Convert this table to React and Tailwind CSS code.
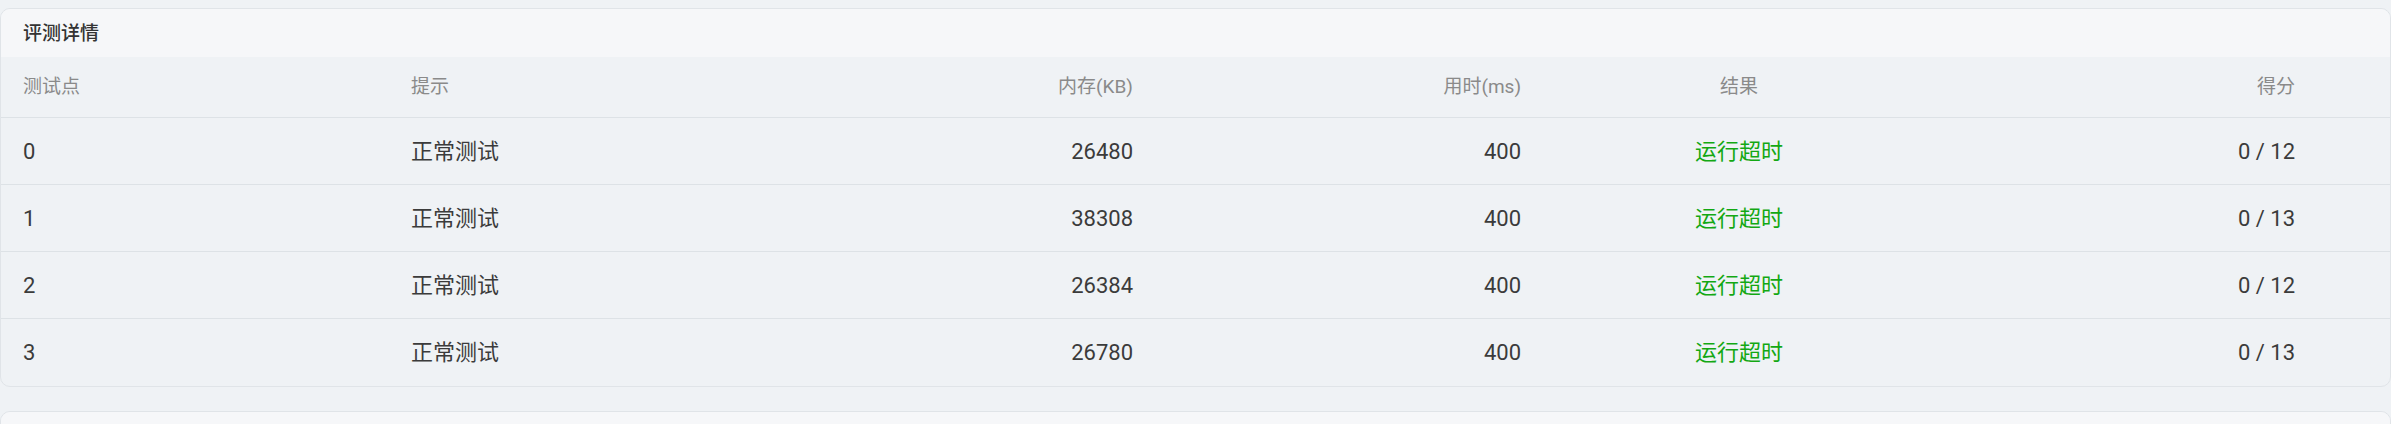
const rows = [
  { id: 0, hint: "正常测试", mem: 26480, time: 400, result: "运行超时", score: "0 / 12" },
  { id: 1, hint: "正常测试", mem: 38308, time: 400, result: "运行超时", score: "0 / 13" },
  { id: 2, hint: "正常测试", mem: 26384, time: 400, result: "运行超时", score: "0 / 12" },
  { id: 3, hint: "正常测试", mem: 26780, time: 400, result: "运行超时", score: "0 / 13" },
];

const cols = "grid grid-cols-[386px_388px_382px_388px_388px_1fr]";

export default function App() {
  return (
    <div
      className="min-h-screen bg-[#eff2f5] pt-2"
      style={{ fontFamily: 'Roboto, "Noto Sans CJK SC", sans-serif' }}
    >
      {/* 评测详情 */}
      <div className="overflow-hidden rounded-[10px] border border-[#e0e4e8] bg-[#eff2f5]">
        <div className="flex h-[48px] items-center bg-[#f6f7f9] pl-[22px] pt-[2px] text-[19px] font-medium text-[#333]">
          评测详情
        </div>

        <div className={`${cols} h-[61px] items-center border-b border-[#dde2e6] text-[19px] text-[#8a8a8a]`}>
          <div className="pl-[22px]">测试点</div>
          <div className="pl-6">提示</div>
          <div className="pr-6 text-right">内存(KB)</div>
          <div className="pr-6 text-right">用时(ms)</div>
          <div className="text-center">结果</div>
          <div className="pr-[95px] text-right">得分</div>
        </div>

        {rows.map((r, i) => (
          <div
            key={r.id}
            className={`${cols} h-[67px] items-center text-[22px] text-[#3b3b3b] ${
              i < rows.length - 1 ? "border-b border-[#dde2e6]" : "h-[66px]"
            }`}
          >
            <div className="pl-[22px]">{r.id}</div>
            <div className="pl-6">{r.hint}</div>
            <div className="pr-6 text-right">{r.mem}</div>
            <div className="pr-6 text-right">{r.time}</div>
            <div className="text-center text-[#13a813]">{r.result}</div>
            <div className="pr-[95px] text-right">{r.score}</div>
          </div>
        ))}
      </div>

      {/* next card */}
      <div className="mt-6 overflow-hidden rounded-[10px] border border-[#e0e4e8] bg-[#eff2f5]">
        <div className="h-[48px] bg-[#f6f7f9]" />
      </div>
    </div>
  );
}
